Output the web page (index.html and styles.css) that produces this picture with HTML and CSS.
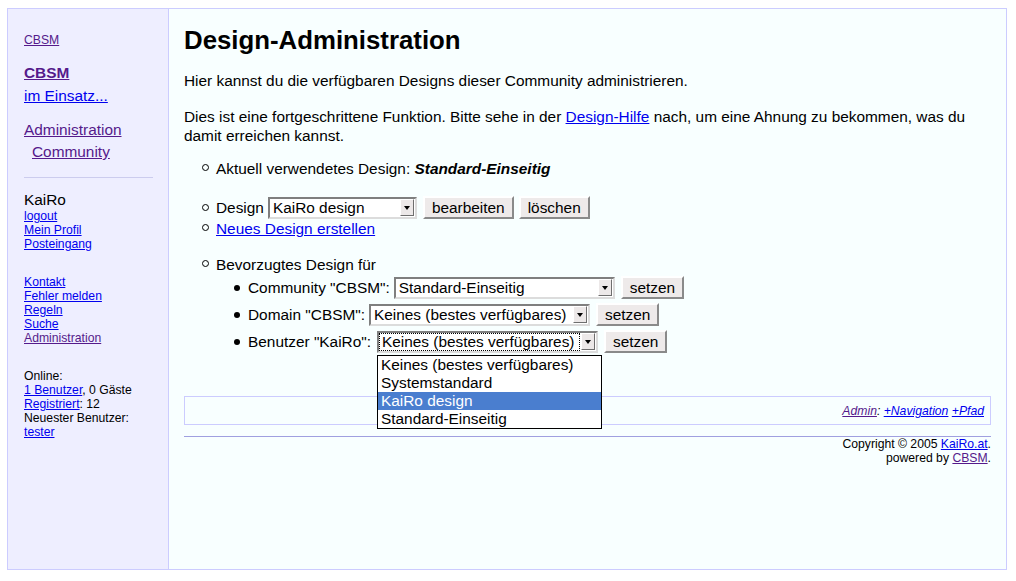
FILE: index.html
```html
<!DOCTYPE html>
<html lang="de">
  <head>
    <meta charset="UTF-8" />
    <title>Design-Administration</title>
    <link rel="stylesheet" href="styles.css">
  </head>
  <body>
    <div class="frame">
      <!-- Sidebar -->
      <div class="sidebar">
        <div class="side-top"><a href="#" class="v">CBSM</a></div>

        <div class="side-title">
          <a href="#" class="v"><b>CBSM</b></a><br />
          <a href="#">im Einsatz...</a>
        </div>

        <div class="side-nav">
          <a href="#" class="v">Administration</a><br />
          <a href="#" class="v sub">Community</a>
        </div>

        <hr class="side-rule" />

        <div class="side-user">KaiRo</div>
        <div class="side-small">
          <a href="#">logout</a><br />
          <a href="#">Mein Profil</a><br />
          <a href="#">Posteingang</a>
        </div>

        <div class="side-small side-gap">
          <a href="#">Kontakt</a><br />
          <a href="#">Fehler melden</a><br />
          <a href="#">Regeln</a><br />
          <a href="#">Suche</a><br />
          <a href="#" class="v">Administration</a>
        </div>

        <div class="side-small side-gap">
          Online:<br />
          <a href="#">1 Benutzer</a>, 0 Gäste<br />
          <a href="#">Registriert</a>: 12<br />
          Neuester Benutzer:<br />
          <a href="#">tester</a>
        </div>
      </div>

      <!-- Main content -->
      <div class="content">
        <h1>Design-Administration</h1>
        <p class="intro">Hier kannst du die verfügbaren Designs dieser Community administrieren.</p>
        <p class="note">
          Dies ist eine fortgeschrittene Funktion. Bitte sehe in der
          <a href="#">Design-Hilfe</a> nach, um eine Ahnung zu bekommen, was du
          damit erreichen kannst.
        </p>

        <ul class="list list-current">
          <li>Aktuell verwendetes Design:&nbsp;<b><i>Standard-Einseitig</i></b></li>
        </ul>

        <ul class="list list-design">
          <li class="row">
            Design
            <span class="select w149">
              <span class="select-value">KaiRo design</span>
              <span class="select-arrow"></span>
            </span>
            <button class="btn">bearbeiten</button>
            <button class="btn btn-next">löschen</button>
          </li>
          <li><a href="#">Neues Design erstellen</a></li>
        </ul>

        <ul class="list list-pref">
          <li>Bevorzugtes Design für
            <ul class="sublist">
              <li class="row">
                Community "CBSM":
                <span class="select w221">
                  <span class="select-value">Standard-Einseitig</span>
                  <span class="select-arrow"></span>
                </span>
                <button class="btn">setzen</button>
              </li>
              <li class="row">
                Domain "CBSM":
                <span class="select w221">
                  <span class="select-value">Keines (bestes verfügbares)</span>
                  <span class="select-arrow"></span>
                </span>
                <button class="btn">setzen</button>
              </li>
              <li class="row">
                Benutzer "KaiRo":
                <span class="select w221 sel-user">
                  <span class="select-value focus">Keines (bestes verfügbares)</span>
                  <span class="select-arrow"></span>
                  <span class="dropdown">
                    <span class="option">Keines (bestes verfügbares)</span>
                    <span class="option">Systemstandard</span>
                    <span class="option selected">KaiRo design</span>
                    <span class="option">Standard-Einseitig</span>
                  </span>
                </span>
                <button class="btn">setzen</button>
              </li>
            </ul>
          </li>
        </ul>

        <div class="admin-box">
          <i><a href="#" class="v">Admin</a>: <a href="#">+Navigation</a> <a href="#">+Pfad</a></i>
        </div>

        <div class="footer">
          Copyright © 2005 <a href="#">KaiRo.at</a>.<br />
          powered by <a href="#" class="v">CBSM</a>.
        </div>
      </div>
    </div>
  </body>
</html>
```

FILE: styles.css
```css
/* Global */
body {
  margin: 8px 0 0 7px;
  background: #ffffff;
  font-family: "Liberation Sans", Arial, sans-serif;
  font-size: 15.4px;
  line-height: 19px;
  color: #000;
}

a {
  color: #0000ee;
}

a.v {
  color: #551a8b;
}

/* Outer frame */
.frame {
  display: flex;
  width: 1000px;
  height: 562px;
  box-sizing: border-box;
  border: 1px solid #ccccff;
}

/* Sidebar */
.sidebar {
  flex-shrink: 0;
  width: 129px;
  background: #eeeeff;
  border-right: 1px solid #ccccff;
  padding: 24px 15px 0 16px;
}

.side-top {
  font-size: 12.2px;
  line-height: 14px;
}

.side-title {
  margin-top: 14px;
  line-height: 23px;
}

.side-nav {
  margin-top: 12px;
  line-height: 22px;
}

.side-nav .sub {
  margin-left: 8px;
}

.side-rule {
  border: none;
  border-top: 1px solid #ccccee;
  margin: 14px 0 0 0;
  height: 0;
}

.side-user {
  margin-top: 12px;
  line-height: 19px;
}

.side-small {
  font-size: 12.2px;
  line-height: 14px;
}

.side-gap {
  margin-top: 24px;
}

/* Content */
.content {
  flex: 1;
  background: #f8ffff;
  padding: 16px 15px 0 15px;
}

.content h1 {
  font-size: 25.8px;
  line-height: 30px;
  margin: 0;
}

.intro {
  margin: 16px 0 0 0;
}

.note {
  margin: 17px 0 0 0;
}

/* Lists */
.list {
  list-style: none;
  margin: 0;
  padding-left: 32px;
}

.list > li::before {
  content: "";
  display: inline-block;
  width: 5px;
  height: 5px;
  border: 1px solid #000;
  border-radius: 50%;
  margin-left: -14px;
  margin-right: 7px;
  vertical-align: 3px;
}

.list-current {
  margin-top: 14px;
}

.list-design {
  margin-top: 18px;
}

.list-pref {
  margin-top: 17px;
}

.row {
  display: flex;
  align-items: center;
  height: 23px;
}

.sublist {
  list-style: none;
  margin: 0;
  padding-left: 32px;
}

.sublist > li {
  height: 27px;
}

.sublist > li::before {
  content: "";
  width: 6px;
  height: 6px;
  background: #000;
  border-radius: 50%;
  margin-left: -14px;
  margin-right: 8px;
}

/* Fake select boxes */
.select {
  position: relative;
  display: inline-flex;
  align-items: center;
  height: 22px;
  box-sizing: border-box;
  margin-left: 4px;
  border: 2px solid;
  border-color: #7f7f7f #dcdcdc #dcdcdc #7f7f7f;
  background: #fff;
}

.w149 {
  width: 149px;
}

.w221 {
  width: 221px;
}

.sel-user {
  margin-left: 6px;
}

.select-value {
  flex: 1;
  padding-left: 3px;
  line-height: 16px;
  white-space: nowrap;
  overflow: hidden;
}

.select-value.focus {
  outline: 1px dotted #000;
  outline-offset: 0;
  margin-left: 1px;
  padding-left: 2px;
}

.select-arrow {
  display: flex;
  align-items: center;
  justify-content: center;
  width: 14px;
  height: 17px;
  box-sizing: border-box;
  margin-right: 1px;
  margin-left: 2px;
  border: 1px solid;
  border-color: #ffffff #6e6e6e #6e6e6e #ffffff;
  background: #ece8e8;
}

.select-arrow::after {
  content: "";
  border-left: 3.5px solid transparent;
  border-right: 3.5px solid transparent;
  border-top: 4px solid #000;
}

/* Open dropdown list */
.dropdown {
  position: absolute;
  top: 22px;
  left: -2px;
  width: 225px;
  box-sizing: border-box;
  border: 1px solid #000;
  background: #fff;
  z-index: 2;
}

.option {
  display: block;
  padding-left: 3px;
  line-height: 18px;
  white-space: nowrap;
}

.option.selected {
  background: #4a7ecf;
  color: #fff;
}

/* Buttons */
.btn {
  height: 23px;
  margin-left: 6px;
  padding: 0 7px;
  font-family: inherit;
  font-size: 15.4px;
  color: #000;
  background: #eeeaea;
  border: 2px solid;
  border-color: #ffffff #8a8a8a #8a8a8a #ffffff;
}

.btn-next {
  margin-left: 5px;
}

/* Admin box and footer */
.admin-box {
  margin-top: 41px;
  height: 27px;
  border: 1px solid #ccccff;
  display: flex;
  align-items: center;
  justify-content: flex-end;
  padding-right: 6px;
  font-size: 12.2px;
  line-height: 14px;
}

.footer {
  margin-top: 11px;
  border-top: 1px solid #a0a0e0;
  text-align: right;
  font-size: 12.2px;
  line-height: 14px;
}
```
